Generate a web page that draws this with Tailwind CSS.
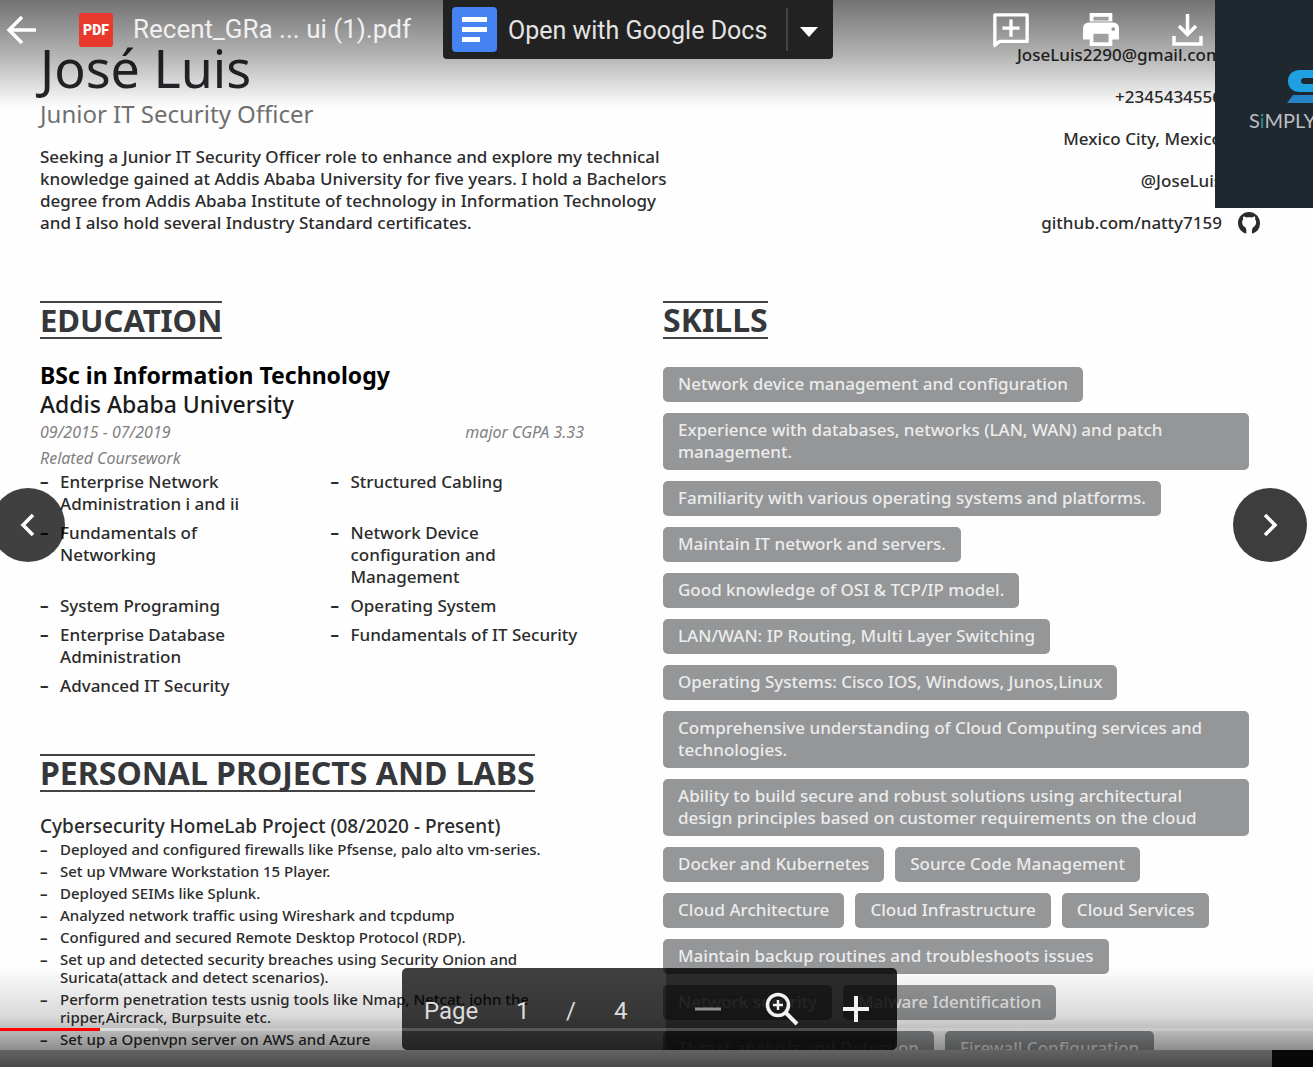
<!DOCTYPE html>
<html lang="en">
<head>
<meta charset="utf-8">
<meta name="viewport" content="width=device-width, initial-scale=1">
<title>Recent_GRa ... ui (1).pdf</title>
<script src="https://cdn.jsdelivr.net/npm/@tailwindcss/browser@4"></script>
</head>
<body class="bg-[#7c7c7c] font-['Noto_Sans',sans-serif] text-[#2b2b2b]">
<div class="relative flex h-screen flex-col overflow-hidden">

  <!-- Document -->
  <main class="min-h-0 flex-1 overflow-hidden bg-[#fefefe] pl-10">
    <header class="flex justify-between pt-[38px] pr-[53px]">
      <div class="w-[640px]">
        <h1 class="text-[52px] leading-[60px] text-[#26282b]">José Luis</h1>
        <p class="mt-0.5 text-2xl leading-7 text-[#707070]">Junior IT Security Officer</p>
        <p class="mt-[18px] text-[17px] leading-[22px] font-medium">Seeking a Junior IT Security Officer role to enhance and explore my technical<br>knowledge gained at Addis Ababa University for five years. I hold a Bachelors<br>degree from Addis Ababa Institute of technology in Information Technology<br>and I also hold several Industry Standard certificates.</p>
      </div>
      <address class="flex flex-col items-end gap-5 pt-1.5 text-[17px] leading-[22px] font-medium not-italic">
        <a href="#" class="pr-[38px]">JoseLuis2290@gmail.com</a>
        <span class="pr-[38px]">+2345434556</span>
        <span class="pr-[38px]">Mexico City, Mexico</span>
        <a href="#" class="pr-[38px]">@JoseLuis</a>
        <a href="#" class="flex items-center gap-4">github.com/natty7159
          <svg class="size-[22px]" viewBox="0 0 16 16" fill="#2b2b2b" aria-hidden="true"><path d="M8 0C3.58 0 0 3.58 0 8c0 3.54 2.29 6.53 5.47 7.59.4.07.55-.17.55-.38 0-.5 0-1.800 0-2.400 0-.6-.5-1.200-.8-1.800C3.500 10.300 3 9 3 7.500c0-.87.31-1.590.82-2.150-.08-.2-.36-1.020.08-2.120 0 0 .67-.21 2.200.82.64-.18 1.320-.27 2-.27s1.360.09 2 .27c1.530-1.040 2.200-.82 2.200-.82.44 1.100.16 1.920.08 2.120.51.56.82 1.270.82 2.150 0 1.500-.6 2.900-2.100 3.500-.4.500-.9 1.200-.9 1.900v2.300c0 .21.15.46.55.38A8.010 8.010 0 0 0 16 8c0-4.420-3.580-8-8-8z"/></svg>
        </a>
      </address>
    </header>

    <div class="mt-[67px] grid grid-cols-[544fr_586fr] gap-x-[79px] pr-16">
      <div>
        <section>
          <h2 class="w-fit border-y-2 border-[#444] text-[31px] leading-[34px] font-bold text-[#35373a]">EDUCATION</h2>
          <h3 class="mt-[22px] text-[23px] leading-[29px] font-bold text-black">BSc in Information Technology</h3>
          <p class="text-[23px] leading-[29px] font-medium text-[#1a1a1a]">Addis Ababa University</p>
          <div class="flex justify-between text-base leading-[26px] text-[#808080] italic">
            <span>09/2015 - 07/2019</span><span>major CGPA 3.33</span>
          </div>
          <p class="text-base leading-[26px] text-[#808080] italic">Related Coursework</p>
          <ul class="grid grid-cols-2 gap-x-[37px] gap-y-[7px] text-[17px] leading-[22px] font-medium">
            <li class="flex"><span class="w-5 shrink-0 font-bold">–</span><span>Enterprise Network<br>Administration i and ii</span></li>
            <li class="flex"><span class="w-5 shrink-0 font-bold">–</span><span>Structured Cabling</span></li>
            <li class="flex"><span class="w-5 shrink-0 font-bold">–</span><span>Fundamentals of<br>Networking</span></li>
            <li class="flex"><span class="w-5 shrink-0 font-bold">–</span><span>Network Device<br>configuration and<br>Management</span></li>
            <li class="flex"><span class="w-5 shrink-0 font-bold">–</span><span>System Programing</span></li>
            <li class="flex"><span class="w-5 shrink-0 font-bold">–</span><span>Operating System</span></li>
            <li class="flex"><span class="w-5 shrink-0 font-bold">–</span><span>Enterprise Database<br>Administration</span></li>
            <li class="flex"><span class="w-5 shrink-0 font-bold">–</span><span class="whitespace-nowrap">Fundamentals of IT Security</span></li>
            <li class="flex"><span class="w-5 shrink-0 font-bold">–</span><span>Advanced IT Security</span></li>
          </ul>
        </section>

        <section class="mt-[57px]">
          <h2 class="w-fit border-y-2 border-[#444] text-[32px] leading-[34px] font-bold whitespace-nowrap text-[#35373a]">PERSONAL PROJECTS AND LABS</h2>
          <h3 class="mt-[21px] text-[19px] leading-[26px] font-medium">Cybersecurity HomeLab Project (08/2020 - Present)</h3>
          <ul class="mt-px flex flex-col gap-1 text-[15px] leading-[18px] font-medium">
            <li class="flex"><span class="w-5 shrink-0 font-bold">–</span><span>Deployed and configured firewalls like Pfsense, palo alto vm-series.</span></li>
            <li class="flex"><span class="w-5 shrink-0 font-bold">–</span><span>Set up VMware Workstation 15 Player.</span></li>
            <li class="flex"><span class="w-5 shrink-0 font-bold">–</span><span>Deployed SEIMs like Splunk.</span></li>
            <li class="flex"><span class="w-5 shrink-0 font-bold">–</span><span>Analyzed network traffic using Wireshark and tcpdump</span></li>
            <li class="flex"><span class="w-5 shrink-0 font-bold">–</span><span>Configured and secured Remote Desktop Protocol (RDP).</span></li>
            <li class="flex"><span class="w-5 shrink-0 font-bold">–</span><span>Set up and detected security breaches using Security Onion and<br>Suricata(attack and detect scenarios).</span></li>
            <li class="flex"><span class="w-5 shrink-0 font-bold">–</span><span>Perform penetration tests usnig tools like Nmap, Netcat, john the<br>ripper,Aircrack, Burpsuite etc.</span></li>
            <li class="flex"><span class="w-5 shrink-0 font-bold">–</span><span>Set up a Openvpn server on AWS and Azure</span></li>
          </ul>
        </section>
      </div>

      <section>
        <h2 class="w-fit border-y-2 border-[#444] text-[32px] leading-[34px] font-bold text-[#35373a]">SKILLS</h2>
        <ul class="mt-7 flex flex-wrap gap-[11px] text-[17px] leading-[22px] font-medium text-[#ececec]">
          <li class="rounded-[5px] bg-[#949698] px-[15px] pt-1.5 pb-[7px]">Network device management and configuration</li>
          <li class="w-full rounded-[5px] bg-[#949698] px-[15px] pt-1.5 pb-[7px]">Experience with databases, networks (LAN, WAN) and patch<br>management.</li>
          <li class="rounded-[5px] bg-[#949698] px-[15px] pt-1.5 pb-[7px]">Familiarity with various operating systems and platforms.</li>
          <li class="rounded-[5px] bg-[#949698] px-[15px] pt-1.5 pb-[7px]">Maintain IT network and servers.</li>
          <li class="rounded-[5px] bg-[#949698] px-[15px] pt-1.5 pb-[7px]">Good knowledge of OSI &amp; TCP/IP model.</li>
          <li class="rounded-[5px] bg-[#949698] px-[15px] pt-1.5 pb-[7px]">LAN/WAN: IP Routing, Multi Layer Switching</li>
          <li class="rounded-[5px] bg-[#949698] px-[15px] pt-1.5 pb-[7px]">Operating Systems: Cisco IOS, Windows, Junos,Linux</li>
          <li class="w-full rounded-[5px] bg-[#949698] px-[15px] pt-1.5 pb-[7px]">Comprehensive understanding of Cloud Computing services and<br>technologies.</li>
          <li class="w-full rounded-[5px] bg-[#949698] px-[15px] pt-1.5 pb-[7px]">Ability to build secure and robust solutions using architectural<br>design principles based on customer requirements on the cloud</li>
          <li class="rounded-[5px] bg-[#949698] px-[15px] pt-1.5 pb-[7px]">Docker and Kubernetes</li>
          <li class="rounded-[5px] bg-[#949698] px-[15px] pt-1.5 pb-[7px]">Source Code Management</li>
          <li class="rounded-[5px] bg-[#949698] px-[15px] pt-1.5 pb-[7px]">Cloud Architecture</li>
          <li class="rounded-[5px] bg-[#949698] px-[15px] pt-1.5 pb-[7px]">Cloud Infrastructure</li>
          <li class="rounded-[5px] bg-[#949698] px-[15px] pt-1.5 pb-[7px]">Cloud Services</li>
          <li class="rounded-[5px] bg-[#949698] px-[15px] pt-1.5 pb-[7px]">Maintain backup routines and troubleshoots issues</li>
          <li class="rounded-[5px] bg-[#949698] px-[15px] pt-1.5 pb-[7px]">Network security</li>
          <li class="rounded-[5px] bg-[#949698] px-[15px] pt-1.5 pb-[7px]">Malware Identification</li>
          <li class="rounded-[5px] bg-[#949698] px-[15px] pt-1.5 pb-[7px]">Threat analysis and Detection</li>
          <li class="rounded-[5px] bg-[#949698] px-[15px] pt-1.5 pb-[7px]">Firewall Configuration</li>
        </ul>
      </section>
    </div>
  </main>
  <footer class="flex h-[17px] shrink-0 justify-end bg-[#b4b4b4]"><div class="w-[41px] bg-[#111]"></div></footer>

  <!-- Shading behind the overlaid controls -->
  <div class="pointer-events-none absolute inset-x-0 top-0 h-[108px] bg-linear-to-b from-black/55 via-black/30 to-transparent"></div>
  <div class="pointer-events-none absolute inset-x-0 bottom-0 h-[100px] bg-linear-to-t from-black/60 via-black/15 to-transparent"></div>

  <!-- Page and zoom controls -->
  <div class="absolute bottom-[17px] left-[402px] flex h-[82px] w-[495px] overflow-hidden rounded-[5px] bg-black/75 font-[Roboto,sans-serif] text-2xl text-[#dcdcdc]">
    <div class="grid w-[264px] grid-cols-[92px_50px_48px_48px] items-center pt-1 pl-[22px]">
      <span>Page</span><span>1</span><span>/</span><span>4</span>
    </div>
    <div class="flex flex-1 items-center gap-[43px] bg-black/30 pl-7">
      <button type="button" aria-label="Zoom out"><svg class="h-8 w-7" viewBox="0 0 28 32" stroke="#8e8e8e" stroke-width="3"><path d="M1 16h26"/></svg></button>
      <button type="button" aria-label="Fit to page"><svg class="size-[34px]" viewBox="0 0 34 34" fill="none" stroke="#f2f2f2"><circle cx="13" cy="13" r="10.500" stroke-width="3.500"/><path d="M20.500 20.500 32 32" stroke-width="4"/><path d="M8 13h10M13 8v10" stroke-width="2.500"/></svg></button>
      <button type="button" aria-label="Zoom in"><svg class="h-8 w-7" viewBox="0 0 28 32" stroke="#f2f2f2" stroke-width="4"><path d="M1 16h26M14 3v26"/></svg></button>
    </div>
  </div>

  <!-- Previous and next -->
  <button type="button" aria-label="Previous" class="absolute top-[488px] -left-[9px] grid size-[74px] place-items-center rounded-full bg-black/75"><svg class="size-6" viewBox="0 0 24 24" fill="none" stroke="#fff" stroke-width="3.500"><path d="M17 2 7 12l10 10"/></svg></button>
  <button type="button" aria-label="Next" class="absolute top-[488px] right-1.5 grid size-[74px] place-items-center rounded-full bg-[#3d3d3d]"><svg class="size-6" viewBox="0 0 24 24" fill="none" stroke="#fff" stroke-width="3.500"><path d="m7 2 10 10L7 22"/></svg></button>

  <!-- Top bar -->
  <div class="absolute inset-x-0 top-0 flex h-[59px] items-center font-[Roboto,sans-serif] text-white">
    <button type="button" aria-label="Back" class="ml-1.5"><svg class="h-8 w-[31px]" viewBox="0 0 31 32" fill="none" stroke="#fff" stroke-width="3.500"><path d="M30 16H3M16 3 3 16l13 13"/></svg></button>
    <div class="ml-[42px] grid h-[34px] w-[34px] place-items-center rounded-[3px] bg-[#e8392c] text-sm font-black">PDF</div>
    <span class="ml-5 w-[310px] text-[26px] whitespace-nowrap text-[#f0f0f0]">Recent_GRa ... ui (1).pdf</span>
    <div class="flex h-[59px] w-[390px] shrink-0 items-center rounded-b-[4px] bg-[#222] text-[25px] text-[#e4e4e4]">
      <button type="button" class="flex h-full items-center pl-[9px]">
        <svg class="size-[45px]" viewBox="0 0 45 45" aria-hidden="true"><rect width="45" height="45" rx="4" fill="#4583f2"/><path d="M10 12.500h25M10 22.500h25M10 32.500h18" stroke="#fff" stroke-width="5"/></svg>
        <span class="ml-[11px] w-[278px] pt-0.5 text-left">Open with Google Docs</span>
      </button>
      <button type="button" aria-label="More apps" class="flex h-[43px] items-center border-l-2 border-[#444] pt-1 pl-3"><svg class="h-2.5 w-[18px]" viewBox="0 0 18 10"><path d="M0 0h18L9 10z" fill="#fff"/></svg></button>
    </div>
    <div class="mr-[110px] ml-auto flex items-center gap-[52px]">
      <button type="button" aria-label="Add comment"><svg class="h-[38px] w-[38px]" viewBox="0 0 40 40" fill="none" stroke="#fff" stroke-width="3.500"><path d="M3 36V4h34v28H8z" stroke-linejoin="round"/><path d="M2 32v7l7-7z" fill="#fff" stroke="none"/><path d="M20 9v18M11 18h18"/></svg></button>
      <button type="button" aria-label="Print"><svg class="h-[34px] w-[38px]" viewBox="0 0 40 36"><path d="M8 0h24v9H8z" fill="#fff"/><path d="M12 4h16v4H12z" fill="#a0a0a0"/><path d="M7 10h26a6 6 0 0 1 6 6v12h-7v7H8v-7H1V16a6 6 0 0 1 6-6z" fill="#fff"/><path d="M12 22h16v9H12z" fill="#a0a0a0"/><circle cx="33" cy="17" r="2" fill="#999"/></svg></button>
      <button type="button" aria-label="Download"><svg class="h-[32px] w-[31px]" viewBox="0 0 31 32" fill="none" stroke="#fff" stroke-width="3.500"><path d="M15.500 0v19M7 12l8.500 8.500L24 12M2 22v8h27v-8"/></svg></button>
    </div>
  </div>

  <!-- Channel mark -->
  <div class="absolute top-0 right-0 h-[208px] w-[98px] overflow-hidden bg-[#20282f] pt-[70px] pl-[34px] font-[Lato,sans-serif]">
    <svg class="ml-[38px] h-[33px] w-[60px]" viewBox="0 0 60 33" fill="none" aria-hidden="true"><path d="M60 0H13C5 0 1 5 1 11s4 11 12 11h47v-8H17a3 3 0 0 1 0-6h43z" fill="#1fa0e0"/><path d="M6 25h54v8H0z" fill="#2583c6"/></svg>
    <p class="mt-[3px] text-xl leading-7 whitespace-nowrap text-[#b9bec1]">S<span class="text-[#2f8d9c]">i</span>MPLY</p>
  </div>

  <!-- Playback progress -->
  <div class="absolute inset-x-0 bottom-9 flex h-[3px] bg-white/20" role="progressbar" aria-label="Playback" aria-valuenow="8" aria-valuemin="0" aria-valuemax="100">
    <div class="w-[100px] bg-[#f00]"></div><div class="w-[58px] bg-white/40"></div>
  </div>
</div>
</body>
</html>
